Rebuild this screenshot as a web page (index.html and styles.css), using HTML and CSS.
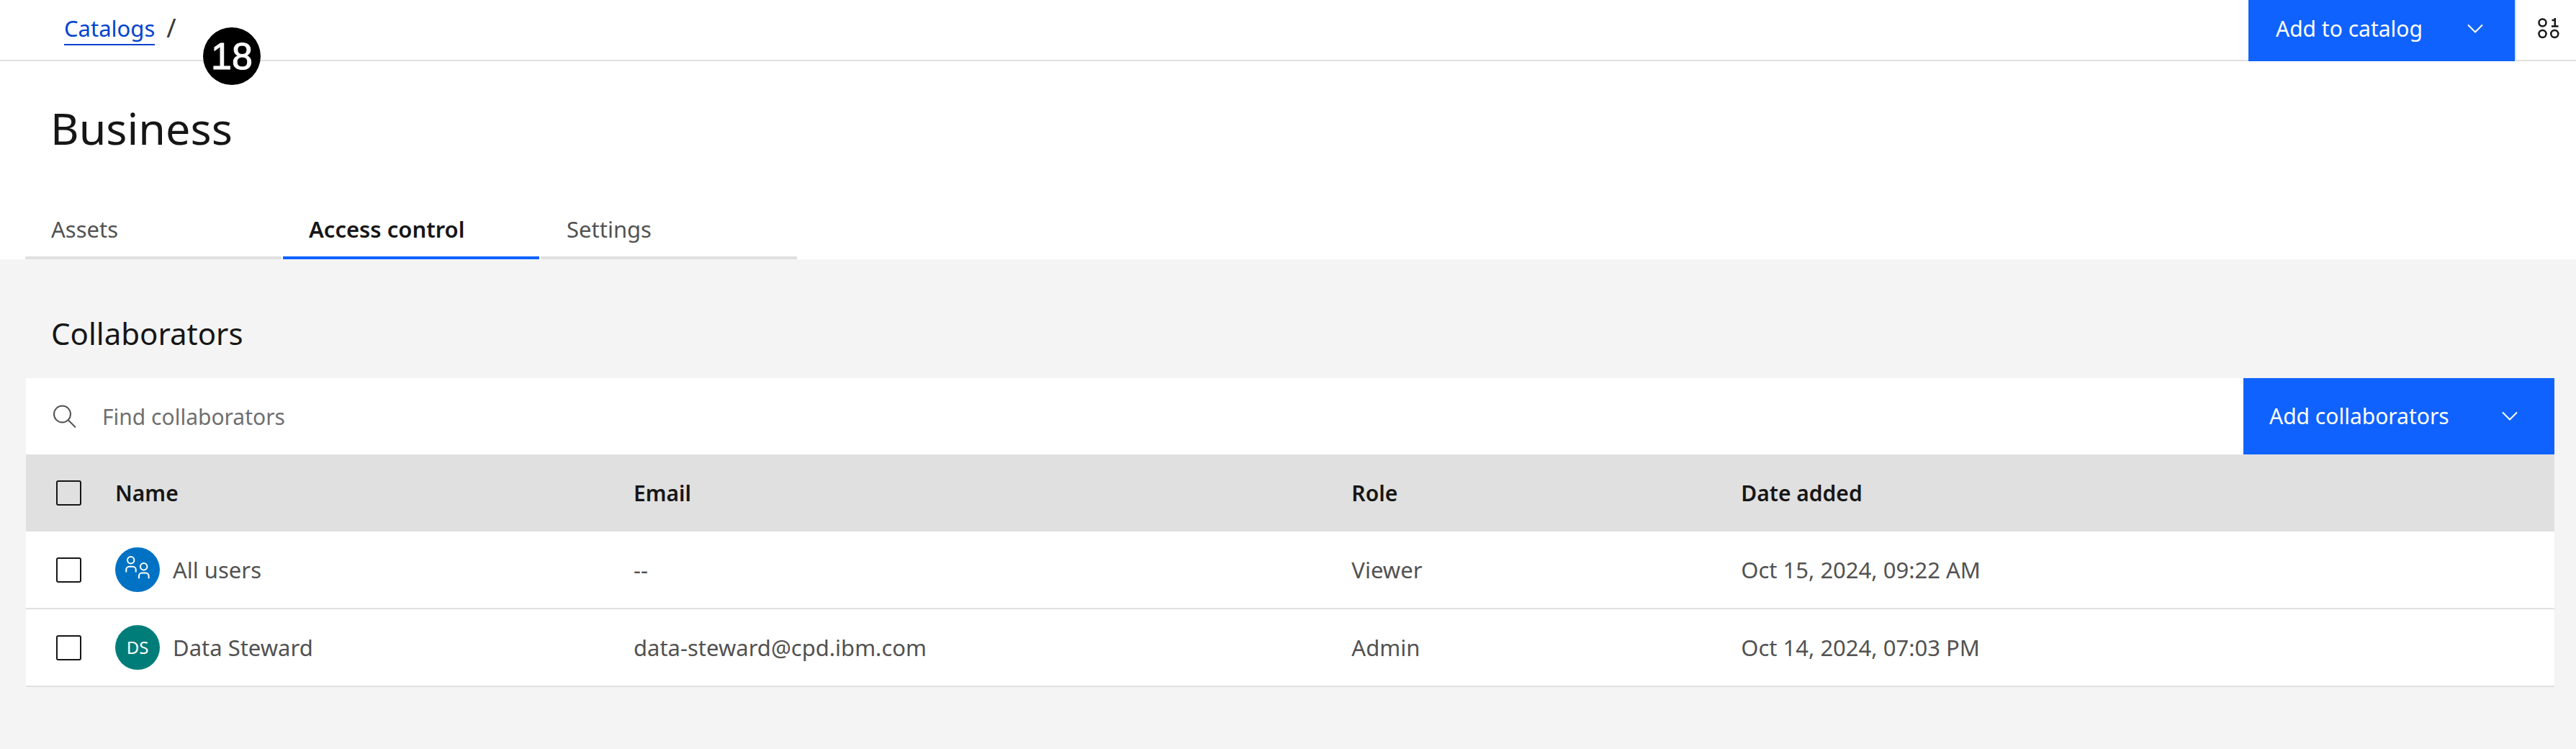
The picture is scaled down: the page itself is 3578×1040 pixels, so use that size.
FILE: index.html
```html
<!DOCTYPE html>
<html lang="en">
<head>
<meta charset="utf-8">
<meta name="viewport" content="width=device-width, initial-scale=1">
<title>Business - Access control</title>
<link rel="stylesheet" href="styles.css">
</head>
<body>
<header class="topbar">
  <nav class="breadcrumb" aria-label="Breadcrumb">
    <a class="breadcrumb-link" href="#catalogs">Catalogs</a>
    <span class="breadcrumb-sep">/</span>
  </nav>
  <span class="step-badge">18</span>
  <div class="topbar-actions">
    <button class="btn btn-catalog" type="button">
      <span>Add to catalog</span>
      <svg class="chevron" viewBox="0 0 24 14" aria-hidden="true"><path d="M2 1.5 12 11.5 22 1.5"/></svg>
    </button>
    <button class="icon-btn" type="button" aria-label="Data panel">
      <svg class="data-icon" viewBox="0 0 30 30" aria-hidden="true">
        <circle cx="6.5" cy="7.5" r="5"/><circle cx="6.5" cy="23" r="5"/><circle cx="23.300" cy="23" r="5"/>
        <path d="M19.500 4h4.300V12.500M19 12.500h9.500M23.800 1v11"/>
      </svg>
    </button>
  </div>
</header>

<section class="page-head">
  <h1 class="page-title">Business</h1>
  <nav class="tabs" aria-label="Catalog sections">
    <a class="tab" href="#assets">Assets</a>
    <a class="tab tab-active" href="#access" aria-current="page">Access control</a>
    <a class="tab" href="#settings">Settings</a>
  </nav>
</section>

<main class="content">
  <h2 class="section-title">Collaborators</h2>
  <div class="toolbar">
    <label class="search">
      <svg class="search-icon" viewBox="0 0 32 32" aria-hidden="true"><circle cx="12.500" cy="13" r="11.500"/><path d="M20.500 21 31 31.500"/></svg>
      <input class="search-input" type="search" placeholder="Find collaborators" aria-label="Find collaborators">
    </label>
    <button class="btn btn-collab" type="button">
      <span>Add collaborators</span>
      <svg class="chevron" viewBox="0 0 24 14" aria-hidden="true"><path d="M2 1.5 12 11.5 22 1.5"/></svg>
    </button>
  </div>
  <table class="table">
    <colgroup><col class="col-check"><col class="col-name"><col class="col-email"><col class="col-role"><col></colgroup>
    <thead>
      <tr>
        <th class="cell-check"><input class="checkbox" type="checkbox" aria-label="Select all"></th>
        <th>Name</th><th>Email</th><th>Role</th><th>Date added</th>
      </tr>
    </thead>
    <tbody>
      <tr>
        <td class="cell-check"><input class="checkbox" type="checkbox" aria-label="Select All users"></td>
        <td>
          <div class="person">
            <span class="avatar avatar-blue">
              <svg class="users-icon" viewBox="0 0 62 62" aria-hidden="true">
                <circle cx="21.700" cy="17.700" r="4.700"/><path d="M15.300 34.500v-3.500a4.200 4.200 0 0 1 4.200-4.200h5a4.200 4.200 0 0 1 4.200 4.200V34.500"/>
                <circle cx="39.700" cy="26.700" r="4.700"/><path d="M33 43.300v-3.500a4.200 4.200 0 0 1 4.200-4.200h5.200a4.200 4.200 0 0 1 4.200 4.200V43.300"/>
              </svg>
            </span>
            <span>All users</span>
          </div>
        </td>
        <td>--</td><td>Viewer</td><td>Oct 15, 2024, 09:22 AM</td>
      </tr>
      <tr>
        <td class="cell-check"><input class="checkbox" type="checkbox" aria-label="Select Data Steward"></td>
        <td>
          <div class="person">
            <span class="avatar avatar-teal">DS</span>
            <span>Data Steward</span>
          </div>
        </td>
        <td>data-steward@cpd.ibm.com</td><td>Admin</td><td>Oct 14, 2024, 07:03 PM</td>
      </tr>
    </tbody>
  </table>
</main>
</body>
</html>
```

FILE: styles.css
```css
* { box-sizing: border-box; }

body {
  margin: 0;
  background: #f4f4f4;
  color: #161616;
  font: 400 31px/40px "Noto Sans", "Open Sans", sans-serif;
}

button, input { font: inherit; }

/* Top bar */
.topbar {
  position: relative;
  display: flex;
  justify-content: space-between;
  align-items: stretch;
  background: #fff;
  box-shadow: inset 0 -2px #e0e0e0;
}

.breadcrumb {
  display: flex;
  align-items: flex-start;
  gap: 16px;
  padding: 19px 0 22px 89px;
}

.breadcrumb-link {
  padding-bottom: 2px;
  border-bottom: 2px solid #0043ce;
  color: #0043ce;
  text-decoration: none;
}

.breadcrumb-sep {
  color: #393939;
  font-size: 36px;
}

.step-badge {
  position: absolute;
  left: 282px;
  top: 38px;
  width: 80px;
  height: 80px;
  border-radius: 50%;
  background: #000;
  color: #fff;
  font: 400 52px/80px "Liberation Sans", Arial, sans-serif;
  -webkit-text-stroke: 1px #fff;
  text-align: center;
}

.topbar-actions { display: flex; }

.btn {
  display: flex;
  align-items: center;
  justify-content: space-between;
  border: 0;
  background: #0f62fe;
  color: #fff;
  font-size: 30px;
}

.btn-catalog {
  width: 370px;
  padding: 0 43px 5px 38px;
}

.btn-collab {
  width: 432px;
  padding: 0 50px 0 36px;
}

.chevron {
  width: 24px;
  height: 14px;
  fill: none;
  stroke: #fff;
  stroke-width: 2;
}

.icon-btn {
  display: flex;
  align-items: center;
  width: 85px;
  padding: 0 0 8px 30px;
  border: 0;
  border-left: 2px solid #e0e0e0;
  background: none;
}

.data-icon {
  width: 30px;
  height: 30px;
  fill: none;
  stroke: #161616;
  stroke-width: 2.5;
}

/* Title and tabs */
.page-head {
  padding: 53px 35px 0;
  background: #fff;
}

.page-title {
  margin: 0 0 64px;
  padding-left: 35px;
  font-weight: 400;
  font-size: 61px;
  line-height: 80px;
}

.tabs {
  display: flex;
  gap: 2px;
}

.tab {
  width: 356px;
  padding: 16px 36px 18px;
  border-bottom: 4px solid #e0e0e0;
  color: #525252;
  text-decoration: none;
}

.tab-active {
  border-color: #0f62fe;
  color: #161616;
  font-weight: 600;
}

/* Collaborators */
.content { padding: 75px 30px 75px 36px; }

.section-title {
  margin: 0 0 34px;
  padding-left: 35px;
  font-weight: 400;
  font-size: 42px;
  line-height: 56px;
}

.toolbar {
  display: flex;
  height: 106px;
  background: #fff;
}

.search {
  display: flex;
  flex: 1;
  align-items: center;
  gap: 36px;
  padding-left: 38px;
}

.search-icon {
  width: 32px;
  height: 32px;
  fill: none;
  stroke: #525252;
  stroke-width: 2;
}

.search-input {
  flex: 1;
  height: 64px;
  padding: 0;
  border: 0;
  outline: 0;
  background: none;
  color: #161616;
  font-size: 30px;
}

.search-input::placeholder { color: #6f6f6f; }

.table {
  width: 100%;
  border-collapse: separate;
  border-spacing: 0;
  table-layout: fixed;
  background: #fff;
  text-align: left;
}

.col-check { width: 124px; }
.col-name { width: 20.5%; }
.col-email { width: 28.4%; }
.col-role { width: 15.4%; }

.table th {
  height: 107px;
  padding: 0;
  background: #e0e0e0;
  font-weight: 600;
  font-size: 30px;
}

.table td {
  height: 108px;
  padding: 0;
  border-bottom: 2px solid #e0e0e0;
  color: #525252;
}

.table .cell-check { padding-left: 42px; }

.checkbox {
  display: block;
  width: 35px;
  height: 35px;
  margin: 0;
  border: 2px solid #161616;
  border-radius: 3px;
  appearance: none;
}

.checkbox:checked { background: #161616; }

.person {
  display: flex;
  align-items: center;
  gap: 18px;
}

.avatar {
  width: 62px;
  height: 62px;
  border-radius: 50%;
  color: #fff;
  font-size: 24px;
  line-height: 62px;
  text-align: center;
}

.avatar-blue { background: #0072c3; }
.avatar-teal { background: #007d79; }

.users-icon {
  display: block;
  fill: none;
  stroke: #fff;
  stroke-width: 2;
}
```
